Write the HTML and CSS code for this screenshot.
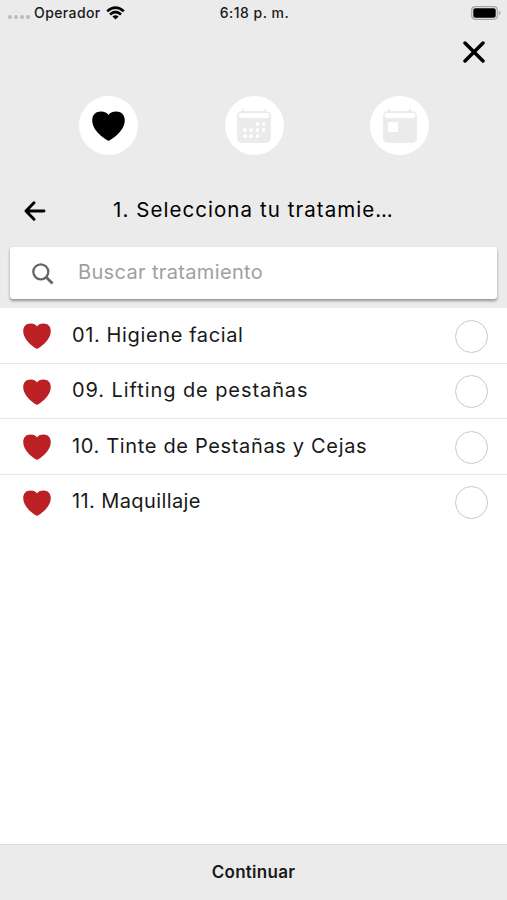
FILE: index.html
```
<!DOCTYPE html>
<html lang="es">
<head>
<meta charset="utf-8">
<title>Selecciona tu tratamiento</title>
<link rel="stylesheet" href="styles.css">
</head>
<body>
<svg class="defs" width="0" height="0">
  <symbol id="heart" viewBox="0 0 28 26"><path d="M14 25.800C13 25.800 9.500 23.400 6 20C2.500 16.500 .2 12.500 .2 8.300C.2 3.200 3.300 .5 7.500 .5C10.700 .5 13 1.700 14 3.500C15 1.700 17.300 .5 20.500 .5C24.700 .5 27.800 3.200 27.800 8.300C27.800 12.500 25.500 16.500 22 20C18.500 23.400 15 25.800 14 25.800Z"/></symbol>
</svg>
<div class="app">
  <header class="header">
    <div class="status">
      <div class="carrier">
        <span class="dots"><i></i><i></i><i></i><i></i></span>
        <span class="operator">Operador</span>
        <svg class="wifi" width="19" height="14" viewBox="0 0 19 14"><g fill="none" stroke="#050505" stroke-width="2.700"><path d="M1.200 5.200Q9.500-2 17.800 5.200"/><path d="M4 8.400Q9.500 3.600 15 8.400"/></g><path d="M6.400 10.500Q9.500 7.900 12.600 10.500L9.500 13.600Z"/></svg>
      </div>
      <span class="time">6:18 p. m.</span>
      <svg class="battery" width="30" height="14" viewBox="0 0 30 14"><rect x=".7" y=".7" width="25.600" height="12.600" rx="3.500" fill="none" stroke="#a5a5a5" stroke-width="1.200"/><rect x="2.300" y="2.300" width="22.400" height="9.400" rx="2"/><path d="M27.800 4.800Q29.500 5.300 29.500 7T27.800 9.200Z" fill="#a5a5a5"/></svg>
    </div>
    <div class="close-row">
      <svg class="close" width="22" height="22" viewBox="0 0 22 22"><path d="M2 2L20 20M20 2L2 20" fill="none" stroke="#000" stroke-width="3.500" stroke-linecap="round"/></svg>
    </div>
    <div class="steps">
      <div class="step"><svg width="33" height="30" viewBox="0 0 28 26" preserveAspectRatio="none"><use href="#heart" width="28" height="26"/></svg></div>
      <div class="step"><svg width="36" height="36" viewBox="0 0 36 36"><path d="M7 1V5M29 1V5" stroke="#ebebeb" stroke-width="2"/><rect x="1" y="3" width="34" height="32" rx="5" fill="#ebebeb"/><rect x="3" y="5" width="30" height="5" rx="2" fill="#fff"/><g fill="#fff"><circle cx="21.500" cy="16" r="1.900"/><circle cx="27.500" cy="16" r="1.900"/><circle cx="9" cy="22" r="1.900"/><circle cx="15" cy="22" r="1.900"/><circle cx="21.500" cy="22" r="1.900"/><circle cx="27.500" cy="22" r="1.900"/><circle cx="9" cy="28" r="1.900"/><circle cx="15" cy="28" r="1.900"/><circle cx="21.500" cy="28" r="1.900"/></g></svg></div>
      <div class="step"><svg width="36" height="36" viewBox="0 0 36 36"><path d="M7 1V5M28 1V5" stroke="#ebebeb" stroke-width="2"/><rect x="1" y="3" width="34" height="32" rx="5" fill="#ebebeb"/><rect x="2.500" y="5" width="31" height="5" rx="2.500" fill="#fff"/><rect x="6" y="14" width="10" height="10" rx="1" fill="#fff"/></svg></div>
    </div>
    <div class="title-row">
      <svg class="back" width="22" height="20" viewBox="0 0 22 20"><path d="M20 10H2M10 1.800L2 10L10 18.200" fill="none" stroke="#000" stroke-width="2.900" stroke-linecap="round" stroke-linejoin="round"/></svg>
      <h1 class="title">1. Selecciona tu tratamie<span class="dots-end">...</span></h1>
    </div>
    <div class="search">
      <svg width="22" height="22" viewBox="0 0 22 22"><g fill="none" stroke="#666" stroke-width="2.300"><circle cx="8.800" cy="8.800" r="7.500"/><path d="M14 14L20.500 20.500" stroke-width="2.800"/></g></svg>
      <span class="placeholder">Buscar tratamiento</span>
    </div>
  </header>
  <main class="list">
    <div class="row"><svg class="heart"><use href="#heart"/></svg><span class="label facial">01. Higiene facial</span><span class="radio"></span></div>
    <div class="row"><svg class="heart"><use href="#heart"/></svg><span class="label lifting">09. Lifting de pestañas</span><span class="radio"></span></div>
    <div class="row"><svg class="heart"><use href="#heart"/></svg><span class="label tinte">10. Tinte de Pestañas y Cejas</span><span class="radio"></span></div>
    <div class="row"><svg class="heart"><use href="#heart"/></svg><span class="label makeup">11. Maquillaje</span><span class="radio"></span></div>
  </main>
  <footer class="footer"><span>Continuar</span></footer>
</div>
</body>
</html>
```
FILE: styles.css
```
* { box-sizing: border-box; }
body { margin: 0; background: #fff; color: #191919; font-family: Inter, "Liberation Sans", sans-serif; }
svg { display: block; flex: none; }
.defs { position: absolute; }
.app { height: 900px; display: flex; flex-direction: column; overflow: hidden; }
.header { height: 308px; background: #ebebeb; }
.status { height: 26px; display: grid; grid-template-columns: 1fr auto 1fr; align-items: center; padding: 0 6px 0 8px; font-size: 14px; font-weight: 500; line-height: 26px; }
.carrier { display: flex; align-items: center; }
.dots { display: flex; gap: 2px; width: 26px; padding-top: 8px; }
.dots i { width: 4px; height: 4px; border-radius: 50%; background: #bcbcbc; }
.operator { width: 72px; white-space: nowrap; letter-spacing: .4px; }
.time { letter-spacing: .5px; }
.battery { justify-self: end; }
.close-row { height: 52px; display: flex; justify-content: flex-end; padding: 15px 22px 0 0; }
.steps { height: 95px; display: flex; justify-content: space-between; padding: 18px 78px 0 79px; }
.step { width: 59px; height: 59px; border-radius: 50%; background: #fff; display: flex; align-items: center; justify-content: center; }
.title-row { height: 74px; display: flex; align-items: center; padding: 0 0 0 24px; }
.back { margin-top: 2px; }
.title { margin: 0 0 0 67px; color: #000; font-size: 20.500px; font-weight: 400; line-height: 26px; letter-spacing: 1.060px; white-space: nowrap; }
.dots-end { letter-spacing: -.2px; }
.search { height: 52px; margin: 0 10px; padding: 0 22px; display: flex; align-items: center; background: #fff; border-radius: 3px; box-shadow: 0 2px 3px rgba(0, 0, 0, .38); }
.search svg { margin-top: 2px; }
.placeholder { margin: -3px 0 0 24px; color: #a0a0a0; font-size: 20px; letter-spacing: .35px; }
.list { flex: 1; }
.row { height: 55.500px; display: flex; align-items: center; padding: 0 19px 0 23px; border-bottom: 1px solid #e9e9e9; }
.row:last-child { border-bottom-color: transparent; }
.heart { width: 28px; height: 26px; margin-top: 2px; fill: #bb2025; }
.label { flex: 1; margin: -1px 0 0 21px; font-size: 20px; line-height: 26px; white-space: nowrap; }
.facial { letter-spacing: .62px; }
.lifting { letter-spacing: .92px; }
.tinte { letter-spacing: .66px; }
.makeup { letter-spacing: .4px; }
.radio { width: 33px; height: 33px; margin-top: 2px; border: 1.500px solid #c8c8c8; border-radius: 50%; }
.footer { height: 56px; display: flex; align-items: center; justify-content: center; padding-bottom: 2px; background: #ebebeb; border-top: 1px solid #dedede; font-size: 17px; font-weight: 600; letter-spacing: .25px; }
```
